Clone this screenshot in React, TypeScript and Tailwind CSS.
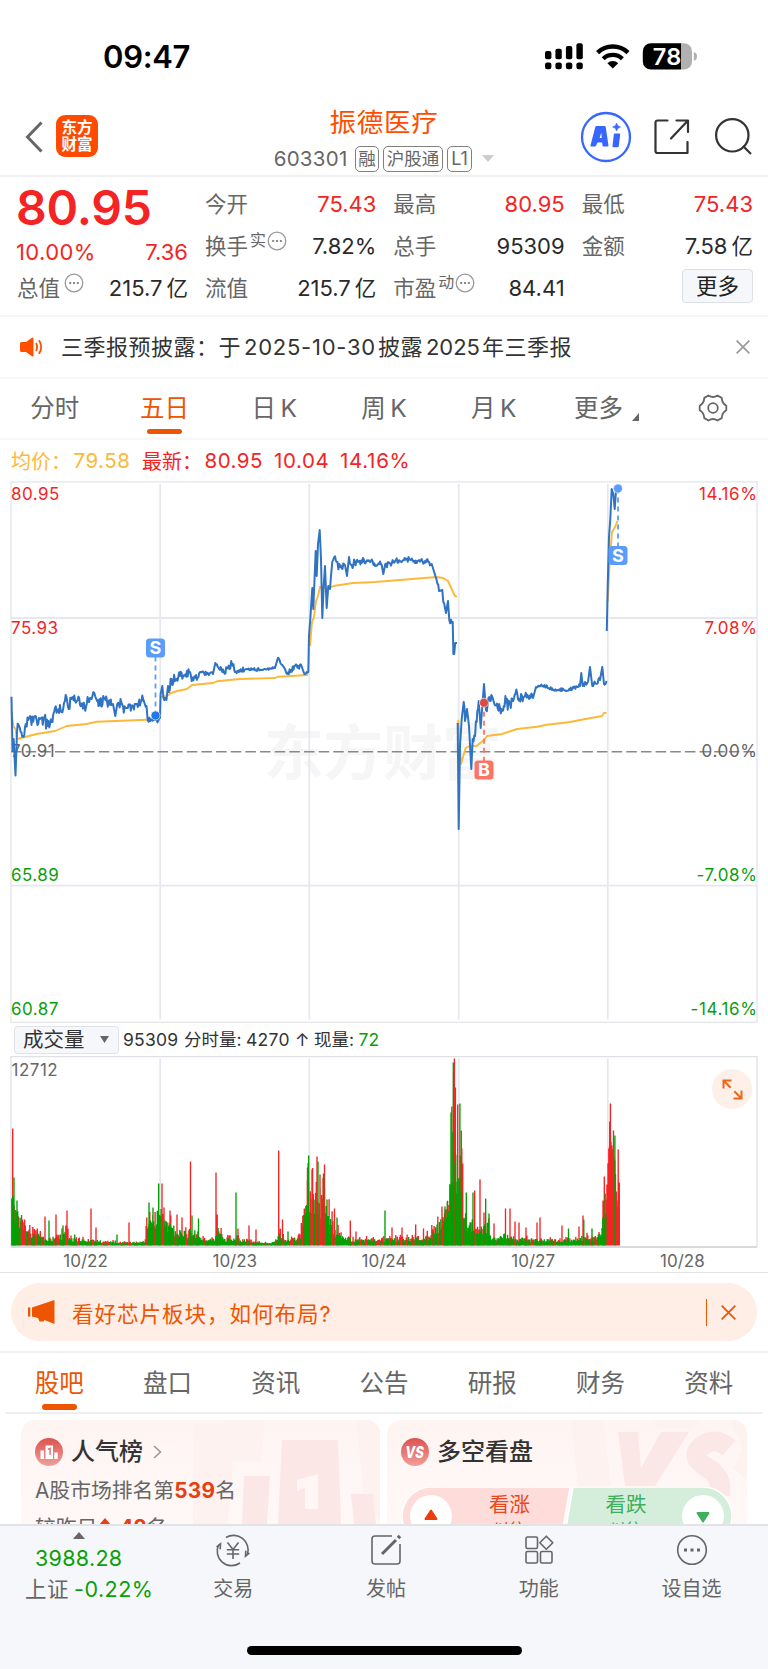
import type { ReactNode } from "react"

const VIEW_TABS = ["分时", "五日", "日 K", "周 K", "月 K"]
const INFO_TABS = ["股吧", "盘口", "资讯", "公告", "研报", "财务", "资料"]
const DATES = ["10/22", "10/23", "10/24", "10/27", "10/28"]
const DAY_LINES = [160.2, 309.3, 458.7, 607.8]

type Point = [number, number, number?]

// x, y and how much the price flickers on the way to the next point
const PRICE_A: Point[] = [
  [11.5, 697.7], [12.5, 752], [13.7, 740], [15.5, 776.5], [17, 733, 3], [19, 727, 3], [20.7, 733, 3], [23, 737, 3],
  [25, 728, 5], [30, 717, 5], [31.5, 726, 5], [35.7, 717, 5], [37.5, 726, 4], [43.5, 719, 5], [47.7, 727, 4],
  [53.3, 715, 3], [55, 709, 3], [60.7, 712, 4], [64, 704, 2], [65.7, 696, 2], [68, 708, 3], [72.7, 698, 3],
  [80, 706, 3], [86, 708, 4], [90, 699, 3], [94.3, 694, 3], [97, 702, 3], [107, 702, 3], [113, 705],
  [115.3, 717], [117.3, 705, 3], [127, 709, 3], [137, 705, 2], [141.5, 702, 3], [146.5, 707], [147.7, 721, 2],
  [155, 720, 2], [160, 719], [160.6, 695], [162.3, 687, 4], [163.5, 699, 4], [166.5, 701, 3], [168, 687, 4],
  [171.5, 680, 4], [175, 682, 4], [180, 677, 3], [190, 673, 3], [191.7, 682, 3], [196, 676, 3], [200, 673, 1],
  [213, 675], [215.3, 664, 2], [220, 671, 3], [227, 669, 2], [232, 665, 2], [235, 673, 1.5], [247, 670, 1],
  [260, 671, 0.6], [275, 669], [277.3, 661, 2], [283, 667, 2], [287.3, 675, 2], [295, 667, 2], [301.5, 667],
  [304.3, 675, 1], [308.3, 673], [309, 637], [310.3, 620], [312.3, 589], [313.3, 610], [315.7, 552], [316.7, 577],
  [318, 545], [319.7, 531], [321, 560], [322.3, 619], [323.7, 587], [325, 567], [326.7, 609], [328.3, 587],
  [330, 590], [331, 577], [332.3, 563], [334.3, 558, 2], [336.7, 563, 3], [340, 568, 3], [345, 566], [347, 577],
  [349, 558, 2], [351.7, 566, 2.4], [358, 563, 2], [371, 562, 2], [381.7, 566], [383.3, 575], [385.3, 565, 1.6],
  [400, 562, 1.6], [409.3, 560, 1.2], [416.7, 564, 1.4], [425, 562, 2], [431.7, 565], [435.7, 578, 2], [439, 592],
  [442.3, 591], [443.3, 603, 3], [446, 614], [448, 602], [449.3, 621, 3], [452.7, 623], [453.4, 655], [454.2, 655],
  [455.2, 644], [457, 644],
]
const PRICE_B: Point[] = [
  [457.7, 724], [458.7, 830], [460, 747], [461.7, 720], [463.7, 703, 2], [465, 722], [467, 710], [469, 727],
  [471.3, 770], [472.7, 740, 4], [476.7, 723, 3], [478.7, 702], [480.7, 729], [482.3, 707], [484, 685], [486, 711, 3],
  [490, 702, 3], [492, 697, 3], [494.7, 706, 4], [500, 709, 4], [510, 704, 3], [514, 699, 3], [517, 693], [518, 700, 3],
  [525, 697, 3], [533, 699], [536, 688, 1], [543, 687, 1], [553, 691, 1], [570, 691, 1], [580, 687], [581.3, 674],
  [582.7, 687, 2], [588, 683], [590, 668], [592.3, 687, 2], [600, 681], [602.3, 668], [604, 685, 2], [606.5, 682],
]
const PRICE_C: Point[] = [
  [606.8, 632], [607.7, 587], [609, 538], [610.3, 520], [611.7, 490], [613.3, 495], [614.7, 510], [616, 492], [617.7, 488],
]

const AVERAGE =
  "M11.7 713L13.3 727L15.5 730L17 740L25 738L36.7 735L55 732L66.7 727L86.7 725L96.7 722.7L146.7 720.7L160 720.5 " +
  "M161 698L167 697L171 694L177 692L187 690L192 686L213 684L217 682.3L240 680L275 679L278 677.7L308 676 " +
  "M310 647L312 623L314 618L316 602L318 597L320 588L328 589L335 586.7L353 584L375 583L400 581L436.7 578L443 579L448 582L453 593L455 597L457 597.7 " +
  "M458.3 720.7L461 765L463 758L465.7 749L470 747L477 746.7L484 741L487 737L502 735L517 730L537 727.7L547 725.7L570 723L580 721L602 717L604 714L606.5 714 " +
  "M607.7 603L610 557L612 533L615 528L617.5 522"

// typical bar height along the time axis
const VOLUME_BASE: Point[] = [
  [11, 60], [14, 56], [18, 40], [22, 26], [30, 18], [42, 12], [50, 9], [60, 12], [67, 20], [70, 9], [100, 6], [120, 4],
  [145, 5], [148, 40], [155, 34], [161, 46], [165, 32], [172, 24], [182, 16], [190, 18], [195, 18], [202, 9], [214, 7],
  [218, 22], [224, 9], [240, 9], [262, 3], [274, 4], [280, 16], [286, 6], [300, 12], [304, 42], [308, 76], [313, 68],
  [318, 56], [325, 60], [330, 34], [337, 18], [345, 13], [352, 8], [380, 8], [395, 9], [425, 10], [436, 22], [442, 32],
  [448, 46], [451, 120], [454, 174], [457, 118], [461, 96], [464, 44], [468, 24], [474, 32], [480, 20], [488, 32],
  [492, 8], [505, 14], [515, 10], [530, 8], [560, 7], [580, 8], [584, 16], [590, 7], [600, 14], [604, 40], [607, 50],
  [608.5, 96], [611, 104], [615, 84], [617, 38], [619.5, 60],
]
const VOLUME_SPIKES: [number, number, "r" | "g"][] = [
  [12.7, 117, "r"], [14, 68, "g"], [17, 45, "g"], [45, 29, "r"], [49, 25, "g"], [56, 31, "r"], [63, 20, "g"],
  [67, 35, "r"], [74.7, 11, "g"], [91, 37, "r"], [96, 18, "r"], [117, 11, "g"], [129, 23, "r"], [149, 43, "g"],
  [153, 38, "g"], [158.7, 62, "g"], [162, 62, "r"], [164, 38, "r"], [170, 35, "r"], [177, 31, "r"], [182, 28, "r"],
  [190.5, 84, "r"], [192, 30, "g"], [198.5, 27, "g"], [216, 73, "r"], [217.2, 31, "r"], [236, 53, "g"], [238, 17, "r"],
  [249, 20, "r"], [256, 16, "r"], [278.7, 95, "r"], [282.5, 26, "r"], [288, 14, "g"], [307.5, 78, "r"], [308.7, 90, "g"],
  [312, 76, "r"], [317, 89, "r"], [318, 84, "g"], [320, 71, "r"], [323.5, 72, "g"], [324.5, 81, "r"], [327, 46, "g"],
  [334.5, 37, "r"], [337, 28, "g"], [350.3, 25, "r"], [356, 14, "r"], [385, 35, "g"], [392, 18, "r"], [402, 18, "r"],
  [415.7, 21, "r"], [423.5, 17, "r"], [442, 39, "r"], [445, 39, "g"], [447.3, 44, "g"], [451, 133, "g"], [451.8, 139, "r"],
  [453.3, 183, "g"], [454.4, 187, "r"], [455.4, 158, "r"], [457.7, 141, "r"], [459.9, 142, "g"], [461.3, 115, "r"],
  [462.7, 82, "r"], [466.3, 53, "g"], [473, 53, "g"], [474.7, 55, "r"], [480, 66, "r"], [484, 33, "r"], [485.7, 47, "g"],
  [489, 32, "g"], [494, 22, "r"], [505.5, 37, "r"], [510, 37, "r"], [515, 24, "r"], [519, 23, "r"], [526, 18, "r"],
  [537, 23, "r"], [540, 28, "r"], [562, 20, "r"], [568.5, 17, "g"], [579, 19, "r"], [583, 30, "r"], [583.8, 26, "g"],
  [592, 17, "g"], [603, 45, "r"], [604.3, 69, "r"], [605.2, 52, "g"], [606.9, 61, "r"], [610.4, 142, "r"],
  [609.7, 124, "r"], [613.5, 115, "r"], [614.9, 110, "g"], [618.2, 96, "r"], [619.3, 63, "r"],
]

function makeRandom(seed: number) {
  let s = seed
  return () => {
    s = (s * 16807) % 2147483647
    return s / 2147483647
  }
}

function tracePrice(points: Point[], seed: number) {
  const random = makeRandom(seed)
  let d = `M${points[0][0]} ${points[0][1]}`
  for (let i = 0; i < points.length - 1; i++) {
    const [x0, y0, flicker = 0] = points[i]
    const [x1, y1] = points[i + 1]
    const steps = flicker ? Math.max(1, Math.round((x1 - x0) / 0.8)) : 1
    for (let k = 1; k <= steps; k++) {
      const t = k / steps
      const jump = k < steps ? (random() + random() - 1) * flicker * 2.4 : 0
      d += `L${(x0 + (x1 - x0) * t).toFixed(1)} ${(y0 + (y1 - y0) * t + jump).toFixed(1)}`
    }
  }
  return d
}

function buildVolume() {
  const random = makeRandom(4271)
  let red = ""
  let green = ""
  let seg = 0
  for (let x = 11.8; x < 619.8; x += 0.75) {
    while (seg < VOLUME_BASE.length - 2 && VOLUME_BASE[seg + 1][0] < x) seg++
    const [x0, h0] = VOLUME_BASE[seg]
    const [x1, h1] = VOLUME_BASE[seg + 1]
    const base = h0 + ((h1 - h0) * (x - x0)) / (x1 - x0)
    if (x > 608) {
      red += `M${x.toFixed(1)} 1246.5v-${base.toFixed(1)}`
      continue
    }
    const rising = random() > 0.56
    const h = Math.max(2, base * (rising ? 0.35 + random() * 0.85 : 0.4 + random() * 0.5))
    const bar = `M${x.toFixed(1)} 1246.5v-${h.toFixed(1)}`
    if (rising) red += bar
    else green += bar
  }
  for (const [x, h, side] of VOLUME_SPIKES) {
    if (side === "r") red += `M${x} 1246.5v-${h}`
    else green += `M${x} 1246.5v-${h}`
  }
  return { red, green }
}

const VOLUME = buildVolume()

function Dots() {
  return (
    <svg className="h-5 w-5 shrink-0" viewBox="0 0 20 20" fill="none">
      <circle cx="10" cy="10" r="8.8" stroke="#999" strokeWidth="1.3" />
      <path d="M5.2 10h2M9 10h2M12.8 10h2" stroke="#888" strokeWidth="1.8" />
    </svg>
  )
}

function Cross({ className }: { className: string }) {
  return (
    <svg className={className} viewBox="0 0 14 14" fill="none" stroke="currentColor" strokeWidth="1.6">
      <path d="M.6.6l12.8 12.8M13.4.6L.6 13.4" />
    </svg>
  )
}

function StatusBar() {
  return (
    <div className="flex h-[100px] items-start justify-between pr-[70px] pl-[103px]">
      <div className="mt-[38px] text-[31px] leading-[38px] font-semibold tracking-[-0.3px] text-black">09:47</div>
      <svg className="mt-[42px] h-[29px] w-[153px]" viewBox="545 42 153 29">
        <rect x="545" y="51" width="6.4" height="8.3" rx="2" />
        <rect x="555.4" y="48.8" width="6.4" height="10.5" rx="2" />
        <rect x="565.9" y="46" width="6.4" height="13.3" rx="2" />
        <rect x="576.4" y="43.2" width="6.4" height="16.1" rx="2" />
        <rect x="545" y="62.4" width="6.4" height="6.8" rx="2.2" />
        <rect x="555.4" y="62.4" width="6.4" height="6.8" rx="2.2" />
        <rect x="565.9" y="62.4" width="6.4" height="6.8" rx="2.2" />
        <rect x="576.4" y="62.4" width="6.4" height="6.8" rx="2.2" />
        <path d="M597.6 52.6a22 22 0 0 1 30.4 0" fill="none" stroke="#000" strokeWidth="4.4" />
        <path d="M603.2 58.7a13.8 13.8 0 0 1 19.2 0" fill="none" stroke="#000" strokeWidth="4.2" />
        <path d="M607.4 63.2a8 8 0 0 1 10.8 0l-5.4 5.2z" />
        <path d="M651 43.2h30v26.4h-30a8.2 8.2 0 0 1-8.2-8.2v-10a8.2 8.2 0 0 1 8.2-8.2z" />
        <path d="M681 43.2h2.8a8.2 8.2 0 0 1 8.2 8.2v10a8.2 8.2 0 0 1-8.2 8.2H681z" fill="#b0b0b0" />
        <path d="M693.8 52q3.2 1 3.2 4.4t-3.2 4.4z" fill="#b0b0b0" />
        <text x="652.8" y="64.8" textLength="28.5" fontSize="23.5" fontWeight="600" fill="#fff">78</text>
      </svg>
    </div>
  )
}

function Badge({ children }: { children: ReactNode }) {
  return (
    <span className="flex h-[26px] items-center rounded-[5px] border border-[#808080] px-[2.5px] text-[17.5px] leading-none">
      {children}
    </span>
  )
}

function Header() {
  return (
    <div className="flex h-[77px] border-b-2 border-[#f0f0f0]">
      <div className="flex w-[256px] items-start pl-[25px]">
        <svg className="mt-[21px] h-[32px] w-[18px]" viewBox="0 0 18 32" fill="none" stroke="#666" strokeWidth="3">
          <path d="M16.5 1.5L2.5 16l14 14.5" />
        </svg>
        <div className="mt-[15px] ml-[13px] flex h-[42px] w-[42px] flex-col items-center justify-center rounded-[9px] bg-[#ff4b00] text-[15.5px] leading-[17px] font-bold text-white">
          <span>东方</span>
          <span>财富</span>
        </div>
      </div>
      <div className="flex flex-1 flex-col items-center">
        <div className="mt-[7px] text-[26.5px] leading-[30px] tracking-[0.7px] text-[#ff4d00]">振德医疗</div>
        <div className="mt-[9px] flex items-center gap-[4px] text-[#666]">
          <span className="mr-[3px] text-[20.5px] leading-none tracking-[0.3px]">603301</span>
          <Badge>融</Badge>
          <Badge>沪股通</Badge>
          <Badge>
            <span className="px-px text-[18px]">L1</span>
          </Badge>
          <svg className="ml-[6px] h-[7px] w-[12px]" viewBox="0 0 12 7">
            <path d="M0 0h12L6 7z" fill="#ccc" />
          </svg>
        </div>
      </div>
      <div className="flex w-[256px] items-start pl-[68px]">
        <svg className="mt-[11px] h-[52px] w-[52px]" viewBox="0 0 52 52">
          <circle cx="26" cy="26" r="24" fill="none" stroke="#3867ff" strokeWidth="2.3" />
          <path
            d="M16.5 15h8q1 0 1.2 1l2.8 18.5q0 1-1 1h-4q-1 0-1-1l-.4-3h-4.6l-1.3 3q-.3 1-1.3 1h-3.6q-1.3 0-.8-1.2L15.3 16q.3-1 1.2-1zM19.6 27h2.2l-.5-5.5z"
            fill="#3867ff"
            fillRule="evenodd"
          />
          <path d="M34.8 22.5h4.5q1 0 .9 1l-1.5 11.7q-.1 1-1.1 1h-4.2q-1 0-.9-1l1.3-11.7q.1-1 1-1z" fill="#3867ff" />
          <path d="M36.6 12q.7 3.3 4 4q-3.3.7-4 4q-.7-3.3-4-4q3.3-.7 4-4z" fill="#3867ff" stroke="#3867ff" strokeWidth=".6" />
        </svg>
        <svg className="mt-[18px] ml-[21px] h-[37px] w-[37px]" viewBox="0 0 37 37" fill="none" stroke="#333" strokeWidth="2.2" strokeLinecap="round" strokeLinejoin="round">
          <path d="M14.5 2.5H4.5a2 2 0 0 0-2 2V33a2 2 0 0 0 2 2h30v-11" />
          <path d="M18 20.5L34.5 3M23.5 2.5h11.5v11.5" />
        </svg>
        <svg className="mt-[17px] ml-[24px] h-[38px] w-[38px]" viewBox="0 0 38 38" fill="none" stroke="#333" strokeWidth="2.2">
          <circle cx="18.3" cy="18.3" r="16.2" />
          <path d="M29 29l8 8" />
        </svg>
      </div>
    </div>
  )
}

function Amount({ value, unit }: { value: string; unit?: string }) {
  return (
    <span className="ml-auto">
      <span className="text-[22px]">{value}</span>
      {unit && <span className="ml-[4px]">{unit}</span>}
    </span>
  )
}

type StatProps = { label: string; tag?: string; dots?: boolean; value: string; unit?: string; red?: boolean }

function Stat({ label, tag, dots, value, unit, red }: StatProps) {
  return (
    <div className={red ? "flex h-[42px] items-center text-[#f52424]" : "flex h-[42px] items-center text-[#2a2a2a]"}>
      <span className="text-[#666]">{label}</span>
      {tag && <span className="mb-[11px] ml-[2px] text-[16px] leading-none text-[#666]">{tag}</span>}
      {dots && (
        <span className="mb-[9px] ml-px">
          <Dots />
        </span>
      )}
      <Amount value={value} unit={unit} />
    </div>
  )
}

function Quote() {
  return (
    <div className="flex h-[140px] gap-[17px] border-b-2 border-[#f5f5f5] pt-[6px] pr-[15px] pl-[17px] text-[21.5px] leading-[26px]">
      <div className="w-[171px]">
        <div className="mt-[1px] -ml-px h-[48px] text-[48px] leading-[48px] font-semibold tracking-[-0.2px] text-[#f52424]">80.95</div>
        <div className="mt-[5px] -ml-px flex h-[30px] items-center text-[#f52424]">
          <span className="text-[22px] tracking-[0.4px]">10.00%</span>
          <Amount value="7.36" />
        </div>
        <div className="flex h-[42px] items-center text-[#2a2a2a]">
          <span className="text-[#666]">总值</span>
          <span className="mb-[9px] ml-[4px]">
            <Dots />
          </span>
          <Amount value="215.7" unit="亿" />
        </div>
      </div>
      <div className="grid flex-1 grid-cols-3 content-start gap-x-[17px]">
        <Stat label="今开" value="75.43" red />
        <Stat label="最高" value="80.95" red />
        <Stat label="最低" value="75.43" red />
        <Stat label="换手" tag="实" dots value="7.82%" />
        <Stat label="总手" value="95309" />
        <Stat label="金额" value="7.58" unit="亿" />
        <Stat label="流值" value="215.7" unit="亿" />
        <Stat label="市盈" tag="动" dots value="84.41" />
        <div className="-mt-[3px] flex items-center justify-end">
          <span className="flex h-[34px] w-[71px] items-center justify-center rounded-[4px] border border-[#dcdfe6] bg-[#f6f7fa] text-[#222]">
            更多
          </span>
        </div>
      </div>
    </div>
  )
}

function Notice() {
  return (
    <div className="flex h-[62px] items-center border-b-2 border-[#f7f7f7] pr-[18px] pl-[20px]">
      <svg className="h-[20px] w-[23px]" viewBox="0 0 23 20" fill="none">
        <path d="M0 6.5q0-1.5 1.5-1.5H6l6-4.3q1.500-.8 1.500.8v17q0 1.600-1.500.8L6 15H1.500Q0 15 0 13.500z" fill="#ff5000" />
        <path d="M16 6q2.200 4 0 8M19 3.200q4.400 6.800 0 13.600" stroke="#ff5000" strokeWidth="1.8" />
      </svg>
      <div className="mt-px ml-[18px] text-[22px] tracking-[0.5px] text-[#333]">
        三季报预披露：于
        <span className="mr-[2px] ml-[3px] tracking-[0.75px]">2025-10-30</span>
        披露
        <span className="mr-[2px] ml-[3px] tracking-[0px]">2025</span>
        年三季报
      </div>
      <Cross className="ml-auto h-[14px] w-[14px] text-[#999]" />
    </div>
  )
}

function ViewTabs() {
  return (
    <div className="grid h-[61px] grid-cols-7 border-b-2 border-[#f7f7f7] text-[24.5px] leading-[36px] text-[#666]">
      {VIEW_TABS.map((tab) => (
        <div key={tab} className={tab === "五日" ? "flex flex-col items-center pt-[11px] text-[#ee5500]" : "flex flex-col items-center pt-[11px]"}>
          <span className="[word-spacing:-2.5px]">{tab}</span>
          {tab === "五日" && <span className="mt-[3px] h-[5px] w-[35px] rounded-full bg-[#ee5500]" />}
        </div>
      ))}
      <div className="flex justify-center pt-[11px] pl-[6px]">
        <span>更多</span>
        <svg className="mt-[23px] ml-[9px] h-[8px] w-[7px]" viewBox="0 0 7 8">
          <path d="M7 0v8H0z" fill="#666" />
        </svg>
      </div>
      <div className="flex justify-center pt-[15px]">
        <svg className="h-[28px] w-[30px]" viewBox="0 0 30 28" fill="none" stroke="#666" strokeWidth="1.8" strokeLinejoin="round">
          <path d="M10.5 1.5q4.500 3 9 0l4.200 2.400q.3 5.300 4.600 7.900v4.400q-4.300 2.600-4.600 7.900l-4.200 2.400q-4.500-3-9 0l-4.200-2.400q-.3-5.300-4.600-7.900v-4.400q4.300-2.600 4.600-7.900z" />
          <circle cx="15" cy="14" r="4.8" />
        </svg>
      </div>
    </div>
  )
}

function Legend() {
  return (
    <div className="flex h-[43px] items-center pt-px pl-[11px] text-[20px] leading-none text-[#f52424]">
      <span className="w-[62.5px] text-[#fdb83a]">均价：</span>
      <span className="w-[68.5px] text-[20.5px] tracking-[0.5px] text-[#fdb83a]">79.58</span>
      <span className="w-[62.5px]">最新：</span>
      <span className="w-[69.5px] text-[20.5px] tracking-[0.5px]">80.95</span>
      <span className="w-[66px] text-[20.5px] tracking-[0.6px]">10.04</span>
      <span className="text-[20.5px] tracking-[0.7px]">14.16%</span>
    </div>
  )
}

function AxisLabel({ y, value, pct, color }: { y: number; value: string; pct: string; color: string }) {
  return (
    <g fill={color} fontSize="17">
      <text x="11" y={y} letterSpacing="0.45">{value}</text>
      <text x="757.5" y={y} letterSpacing="0.6" textAnchor="end">{pct}</text>
    </g>
  )
}

function TradeMark({ x, y, dotY, letter, color, dot }: { x: number; y: number; dotY: number; letter: string; color: string; dot: string }) {
  return (
    <g>
      <path d={`M${x} ${dotY}V${y}`} stroke={color} strokeWidth="1.8" strokeDasharray="5 4" />
      <circle cx={x} cy={dotY} r="4.5" fill={dot} stroke="#fff" strokeOpacity=".6" />
      <rect x={x - 9.5} y={y - 9.5} width="19" height="19" rx="3.5" fill={color} />
      <text x={x} y={y + 6.3} textAnchor="middle" fontSize="18" fontWeight="700" fill="#fff">{letter}</text>
    </g>
  )
}

function PriceChart() {
  return (
    <svg className="block h-[542px] w-full" viewBox="0 482 768 542" fill="none">
      <text x="264" y="776" fontSize="60" fontWeight="700" textLength="238" fill="#f6f6f6">东方财富</text>
      <path d="M11 1023.3V482.8H757V1023.3z" stroke="#e3e5e9" strokeWidth="1.3" />
      <path d="M11 619H757M11 886.7H757" stroke="#e6e8ee" strokeWidth="1.8" />
      {DAY_LINES.map((x) => (
        <path key={x} d={`M${x} 485V1020.5`} stroke="#e6e8ee" strokeWidth="1.8" />
      ))}
      <path d="M11 752.8H758" stroke="#888" strokeWidth="1.6" strokeDasharray="10.5 4.15" />
      <AxisLabel y={500.5} value="80.95" pct="14.16%" color="#f52424" />
      <AxisLabel y={635} value="75.93" pct="7.08%" color="#f52424" />
      <AxisLabel y={758} value="70.91" pct="0.00%" color="#666" />
      <AxisLabel y={881.5} value="65.89" pct="-7.08%" color="#0a9f0a" />
      <AxisLabel y={1016} value="60.87" pct="-14.16%" color="#0a9f0a" />
      <path d={AVERAGE} stroke="#fdb83a" strokeWidth="1.9" strokeLinejoin="round" />
      <g stroke="#2f73c2" strokeWidth="2" strokeLinejoin="round">
        <path d={tracePrice(PRICE_A, 77)} />
        <path d={tracePrice(PRICE_B, 913)} />
        <path d={tracePrice(PRICE_C, 5)} />
      </g>
      <TradeMark x={155.5} y={649} dotY={716.5} letter="S" color="#5a9cfb" dot="#1f78f0" />
      <TradeMark x={484} y={771} dotY={703.7} letter="B" color="#fb7565" dot="#dd4a44" />
      <TradeMark x={618} y={556.5} dotY={489.5} letter="S" color="#5a9cfb" dot="#5a9cfb" />
    </svg>
  )
}

function VolumeBar() {
  return (
    <div className="flex h-[33px] items-center pl-[14px] text-[17.5px] leading-none text-[#333]">
      <div className="flex h-[28px] w-[105px] items-center justify-between rounded-[4px] border border-[#dfe2ea] bg-[#f6f7fa] pr-[9px] pl-[8px]">
        <span className="text-[20.5px]">成交量</span>
        <svg className="h-[7px] w-[9px]" viewBox="0 0 9 7">
          <path d="M0 0h9L4.5 7z" fill="#666" />
        </svg>
      </div>
      <span className="ml-[4px] w-[61px] tracking-[0.2px]">95309</span>
      <span className="w-[62px]">分时量:</span>
      <span className="w-[49px] tracking-[0.3px]">4270</span>
      <span className="w-[19px]">↑</span>
      <span className="w-[44.5px]">现量:</span>
      <span className="text-[#0a9f0a]">72</span>
    </div>
  )
}

function VolumeChart() {
  return (
    <div className="relative">
      <svg className="block h-[192px] w-full" viewBox="0 1057 768 192" fill="none">
        <path d="M11 1248V1057.7H757V1248" stroke="#dfe1e6" strokeWidth="1.3" />
        <path d="M11 1248H757" stroke="#d8dade" strokeWidth="2" />
        {DAY_LINES.map((x) => (
          <path key={x} d={`M${x} 1059.5V1246`} stroke="#e6e8ee" strokeWidth="1.8" />
        ))}
        <path d={VOLUME.red} stroke="#f52424" strokeWidth="1.35" />
        <path d={VOLUME.green} stroke="#00a000" strokeWidth="1.35" />
        <text x="11.5" y="1076.5" fontSize="17" letterSpacing="0.5" fill="#666">12712</text>
      </svg>
      <div className="absolute top-[13px] right-[16px] flex h-[40px] w-[40px] items-center justify-center rounded-full bg-[#fdf0e9]">
        <svg className="h-[21px] w-[21px]" viewBox="0 0 21 21" fill="none" stroke="#f0641c" strokeWidth="2">
          <path d="M1.5 9.5V1.5H9.5M1.5 1.5l7.2 7.2M19.5 11.5v8h-8M19.5 19.5l-7.2-7.2" />
        </svg>
      </div>
    </div>
  )
}

function Banner() {
  return (
    <div className="h-[80px] border-b-2 border-[#f0f0f0] px-[11px] pt-[10px]">
      <div className="flex h-[58px] items-center rounded-full bg-[#feeee5] pr-[21px] pl-[17px] text-[#ee5500]">
        <svg className="h-[24px] w-[27px]" viewBox="0 0 27 24" fill="#ee5500">
          <path d="M0 7.5h2.3v9H0zM4 7.5L26.5 0v24L16.5 20l-1 1.5h-4l-1.5-3.5-6-1.5z" />
        </svg>
        <span className="mt-[4px] ml-[17px] text-[21.5px] leading-none tracking-[1px]">看好芯片板块，如何布局?</span>
        <span className="ml-auto h-[27px] w-px bg-[#ee5500]" />
        <Cross className="ml-[14px] h-[15px] w-[15px]" />
      </div>
    </div>
  )
}

function InfoTabs() {
  return (
    <div className="mx-[5px] grid h-[61px] grid-cols-7 border-b-2 border-[#efefef] text-[24.5px] leading-[36px] text-[#666]">
      {INFO_TABS.map((tab, i) => (
        <div key={tab} className={i === 0 ? "flex flex-col items-center pt-[12px] text-[#ee5500]" : "flex flex-col items-center pt-[12px]"}>
          <span>{tab}</span>
          {i === 0 && <span className="mt-[3px] h-[6px] w-[35px] rounded-full bg-[#ee5500]" />}
        </div>
      ))}
    </div>
  )
}

function PopularityCard() {
  return (
    <div className="relative h-[170px] w-[359px] overflow-hidden rounded-[14px] bg-gradient-to-b from-[#fef5f3] to-[#fffaf9]">
      <svg className="absolute top-0 right-0 h-[104px] w-[190px]" viewBox="190 0 190 104">
        <path d="M193 4h31l0-4h41l-4 41h-28l-5 63h-35zM357 0h24v104l-18-31z" fill="#fdf2f0" />
        <path d="M282 20h56l3 84h-63zM244 56h26l-3 48h-25zM351 74h22l3 30h-22z" fill="#fbe8e6" />
        <path d="M297 60l21-6v35h-13V68l-8 3z" fill="#fff6f5" />
      </svg>
      <div className="relative flex items-center pt-[17px] pl-[14px]">
        <svg className="h-[28px] w-[28px]" viewBox="0 0 28 28">
          <defs>
            <linearGradient id="rank" x1="0" y1="0" x2="0" y2="1">
              <stop offset="0" stopColor="#dc5250" />
              <stop offset="1" stopColor="#f0a09b" />
            </linearGradient>
          </defs>
          <circle cx="14" cy="14" r="14" fill="url(#rank)" />
          <path d="M5.5 12.5H9V21H5.5zM10.5 7.5H18V21h-7.5zM19.3 14.5h3.4V21h-3.4z" fill="#fff" />
          <path d="M12.8 11.3l2.3-1v6.5" stroke="#dc6a66" strokeWidth="1.4" fill="none" />
        </svg>
        <span className="ml-[8px] text-[24px] leading-[30px] font-medium text-[#333]">人气榜</span>
        <svg className="ml-[10px] h-[14px] w-[9px]" viewBox="0 0 9 14" fill="none" stroke="#999" strokeWidth="1.6">
          <path d="M1 1l6.5 6L1 13" />
        </svg>
      </div>
      <div className="relative mt-[5px] pl-[14px] text-[20.8px] leading-[37px] text-[#666]">
        <div>
          A股市场排名第<b className="tracking-[0.3px] text-[#e83e10]">539</b>名
        </div>
        <div className="flex items-center">
          较昨日
          <svg className="-mt-px mr-[1px] ml-[2px] h-[19px] w-[12px]" viewBox="0 0 12 19">
            <path d="M6 0L12 7H8v12H4V7H0z" fill="#e83e10" />
          </svg>
          <b className="ml-[7px] text-[#e83e10]">42</b>名
        </div>
      </div>
    </div>
  )
}

function VersusCard() {
  return (
    <div className="relative h-[170px] w-[360px] overflow-hidden rounded-[14px] bg-gradient-to-b from-[#fef5f3] to-[#fffaf9]">
      <svg className="absolute top-0 right-0 h-[104px] w-[190px]" viewBox="170 0 190 104">
        <path d="M184 0h32l8 66h-33zM265 0h50l-10 8h-34zM342 0h18v60l-14-12 10-20z" fill="#fdf2f0" />
        <path d="M231 12h20l3 36 20-36h28L268 66h-30z" fill="#fbe8e6" />
        <path d="M342 28q-14-12-27-2t4 21q17 9 14 28" fill="none" stroke="#fbe8e6" strokeWidth="20" />
      </svg>
      <div className="relative flex items-center pt-[17px] pl-[14px]">
        <svg className="h-[28px] w-[28px]" viewBox="0 0 28 28">
          <circle cx="14" cy="14" r="14" fill="url(#rank)" />
          <text x="13.5" y="20" textAnchor="middle" textLength="18.5" lengthAdjust="spacingAndGlyphs" fontSize="16.5" fontWeight="800" fontStyle="italic" fill="#fff">VS</text>
        </svg>
        <span className="ml-[8px] text-[24px] leading-[30px] font-medium text-[#333]">多空看盘</span>
      </div>
      <div className="relative mt-[20px] ml-[15px] h-[58px] w-[330px]">
        <svg className="absolute inset-0 h-full w-full" viewBox="0 0 330 58">
          <path d="M29 0H168L158 58H29A29 29 0 0 1 29 0z" fill="#fddcda" stroke="#fff" strokeWidth="1.5" />
          <path d="M171 0H301A29 29 0 0 1 301 58H161z" fill="#d5eedb" stroke="#fff" strokeWidth="1.5" />
          <circle cx="29" cy="29" r="21" fill="#fff" />
          <circle cx="301" cy="29" r="21" fill="#fff" />
          <path d="M29 23.5l5.5 8.5h-11z" fill="#e83e10" stroke="#e83e10" strokeWidth="2" strokeLinejoin="round" />
          <path d="M301 34.5l5.5-8.5h-11z" fill="#3cb05e" stroke="#3cb05e" strokeWidth="2" strokeLinejoin="round" />
        </svg>
        <div className="relative flex pt-[3px] pl-[19px] text-center text-[20.5px] leading-[30px]">
          <div className="w-[175px] pl-[2px] text-[#e8481c]">
            看涨
            <div className="-mt-[2px] text-[16px] leading-[22px]">以往</div>
          </div>
          <div className="w-[60px] text-[#3cb05e]">
            看跌
            <div className="-mt-[2px] text-[16px] leading-[22px]">以往</div>
          </div>
        </div>
      </div>
    </div>
  )
}

function NavItem({ label, children }: { label: string; children: ReactNode }) {
  return (
    <div className="flex w-[153px] flex-col items-center pt-[6px] text-[20px] leading-[28px] text-[#666]">
      <svg className="h-[36px] w-[36px]" viewBox="0 0 36 36" fill="none" stroke="#666" strokeWidth="1.6">
        {children}
      </svg>
      <span className="mt-[7px]">{label}</span>
    </div>
  )
}

function BottomBar() {
  return (
    <div className="flex h-[145px] flex-col justify-between border-t-2 border-[#e2e3e6] bg-[#f6f7fa]">
      <div className="flex">
        <div className="w-[157px] pt-[6px] text-[21.5px]">
          <svg className="ml-[73px] h-[7px] w-[12px]" viewBox="0 0 12 7">
            <path d="M0 7h12L6 0z" fill="#666" />
          </svg>
          <div className="mt-[5px] ml-[35px] leading-[28px] tracking-[0.3px] text-[#0a9f0a]">3988.28</div>
          <div className="mt-[3px] ml-[25px] flex leading-[28px] tracking-[0.5px] text-[#0a9f0a]">
            <span className="mr-[5px] text-[#666]">上证</span>-0.22%
          </div>
        </div>
        <NavItem label="交易">
          <path d="M11 5.5A14.5 14.5 0 0 1 32.5 22M34.5 21l-4 3.2.3-5.6M25 31A14.5 14.5 0 0 1 3.8 12.5M1.5 15l4-3.2-.3 5.6" />
          <path d="M12.5 10.5l5.5 7 5.5-7M18 17.5V27M11.8 17.7h12.4M11.8 22h12.4" />
        </NavItem>
        <NavItem label="发帖">
          <path d="M24 4H7a3 3 0 0 0-3 3v22a3 3 0 0 0 3 3h22a3 3 0 0 0 3-3V12" />
          <path d="M14 22L28 8" strokeWidth="3" />
          <path d="M30 6l2-2" strokeWidth="3.5" />
        </NavItem>
        <NavItem label="功能">
          <rect x="5" y="5" width="11.5" height="11.5" rx="1.5" />
          <rect x="5" y="19.5" width="11.5" height="11.5" rx="1.5" />
          <rect x="19.5" y="19.5" width="11.5" height="11.5" rx="1.5" />
          <path d="M25.3 4.2l6.5 6.5-6.5 6.5-6.5-6.5z" strokeLinejoin="round" />
        </NavItem>
        <NavItem label="设自选">
          <circle cx="18" cy="18" r="14.3" />
          <path d="M10 18h3M16.5 18h3M23 18h3" strokeWidth="3" />
        </NavItem>
      </div>
      <div className="mb-[14px] ml-[247px] h-[9px] w-[275px] rounded-full bg-black" />
    </div>
  )
}

export default function App() {
  return (
    <div className="flex h-[1669px] w-[768px] flex-col overflow-hidden bg-white font-['Inter','Noto_Sans_CJK_SC',sans-serif]">
      <StatusBar />
      <Header />
      <Quote />
      <Notice />
      <ViewTabs />
      <Legend />
      <div className="-mt-px">
        <PriceChart />
      </div>
      <VolumeBar />
      <VolumeChart />
      <div className="h-[25px] border-b border-[#e3e3e3] px-[11px]">
        <div className="grid grid-cols-5 pt-px text-center text-[17px] leading-[24px] text-[#666]">
          {DATES.map((date) => (
            <span key={date}>{date}</span>
          ))}
        </div>
      </div>
      <Banner />
      <InfoTabs />
      <div className="flex h-[110px] gap-[7px] overflow-hidden pt-[6px] pl-[21px]">
        <PopularityCard />
        <VersusCard />
      </div>
      <BottomBar />
    </div>
  )
}
